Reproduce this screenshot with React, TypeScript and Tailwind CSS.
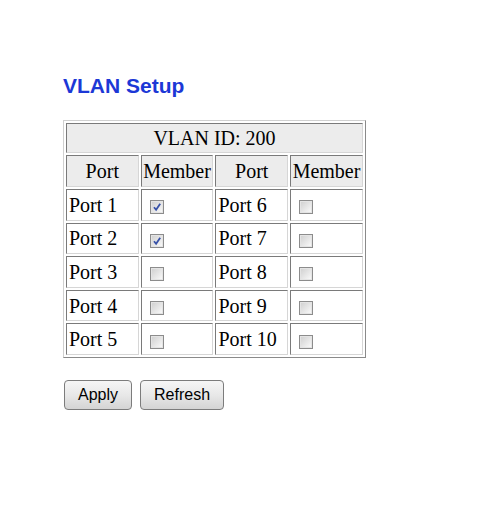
import React from 'react';

const ROWS: { left: string; leftOn: boolean; right: string; rightOn: boolean }[] = [
  { left: 'Port 1', leftOn: true, right: 'Port 6', rightOn: false },
  { left: 'Port 2', leftOn: true, right: 'Port 7', rightOn: false },
  { left: 'Port 3', leftOn: false, right: 'Port 8', rightOn: false },
  { left: 'Port 4', leftOn: false, right: 'Port 9', rightOn: false },
  { left: 'Port 5', leftOn: false, right: 'Port 10', rightOn: false },
];

const cell =
  'border border-t-[#7a7a7a] border-l-[#7a7a7a] border-b-[#d6d6d6] border-r-[#d6d6d6] p-0';

function Box({ checked }: { checked: boolean }) {
  return (
    <span className="ml-[8px] inline-flex h-[14px] w-[14px] items-center justify-center border border-[#8c8c8c] bg-white align-middle">
      <span className="flex h-[12px] w-[12px] items-center justify-center border border-[#e4e4e4] bg-gradient-to-br from-[#d2d2d2] to-[#f8f8f8]">
        {checked && (
          <svg width="10" height="10" viewBox="0 0 10 10">
            <path d="M2 5.2 L4.1 7.8 L8.2 1.8" fill="none" stroke="#3852a8" strokeWidth="1.8" />
          </svg>
        )}
      </span>
    </span>
  );
}

export default function App() {
  return (
    <div className="min-h-[521px] bg-white pl-[63px] pt-[74px]">
      <h1 className="text-[21px] font-bold leading-[23px] text-[#1c38d6] [font-family:'Liberation_Sans',Arial,sans-serif]">
        VLAN Setup
      </h1>

      <table className="mt-[23px] w-[303px] border-separate border-spacing-[2px] border border-t-[#d0d0d0] border-l-[#d0d0d0] border-b-[#8a8a8a] border-r-[#8a8a8a] bg-white text-[20px] text-black [font-family:'Liberation_Serif','Times_New_Roman',serif]">
        <tbody>
          <tr>
            <td colSpan={4} className={`${cell} h-[30px] bg-[#ececec] text-center leading-none`}>
              VLAN ID: 200
            </td>
          </tr>
          <tr>
            {['Port', 'Member', 'Port', 'Member'].map((h, i) => (
              <td key={i} className={`${cell} h-[32px] w-[73px] bg-[#ececec] text-center leading-none`}>
                {h}
              </td>
            ))}
          </tr>
          {ROWS.map((r) => (
            <tr key={r.left}>
              <td className={`${cell} h-[31.6px] pl-[2px] leading-none`}>{r.left}</td>
              <td className={`${cell} h-[31.6px] leading-none`}>
                <Box checked={r.leftOn} />
              </td>
              <td className={`${cell} h-[31.6px] pl-[2px] leading-none`}>{r.right}</td>
              <td className={`${cell} h-[31.6px] leading-none`}>
                <Box checked={r.rightOn} />
              </td>
            </tr>
          ))}
        </tbody>
      </table>

      <div className="ml-px mt-[22px] flex gap-[8px] [font-family:'Liberation_Sans',Arial,sans-serif]">
        {['Apply', 'Refresh'].map((b) => (
          <button
            key={b}
            className="h-[30px] rounded-[4px] border border-[#7c7c7c] bg-gradient-to-b from-[#f6f6f6] via-[#e8e8e8] to-[#d4d4d4] px-[13px] text-[16px] leading-none text-black"
          >
            {b}
          </button>
        ))}
      </div>
    </div>
  );
}
